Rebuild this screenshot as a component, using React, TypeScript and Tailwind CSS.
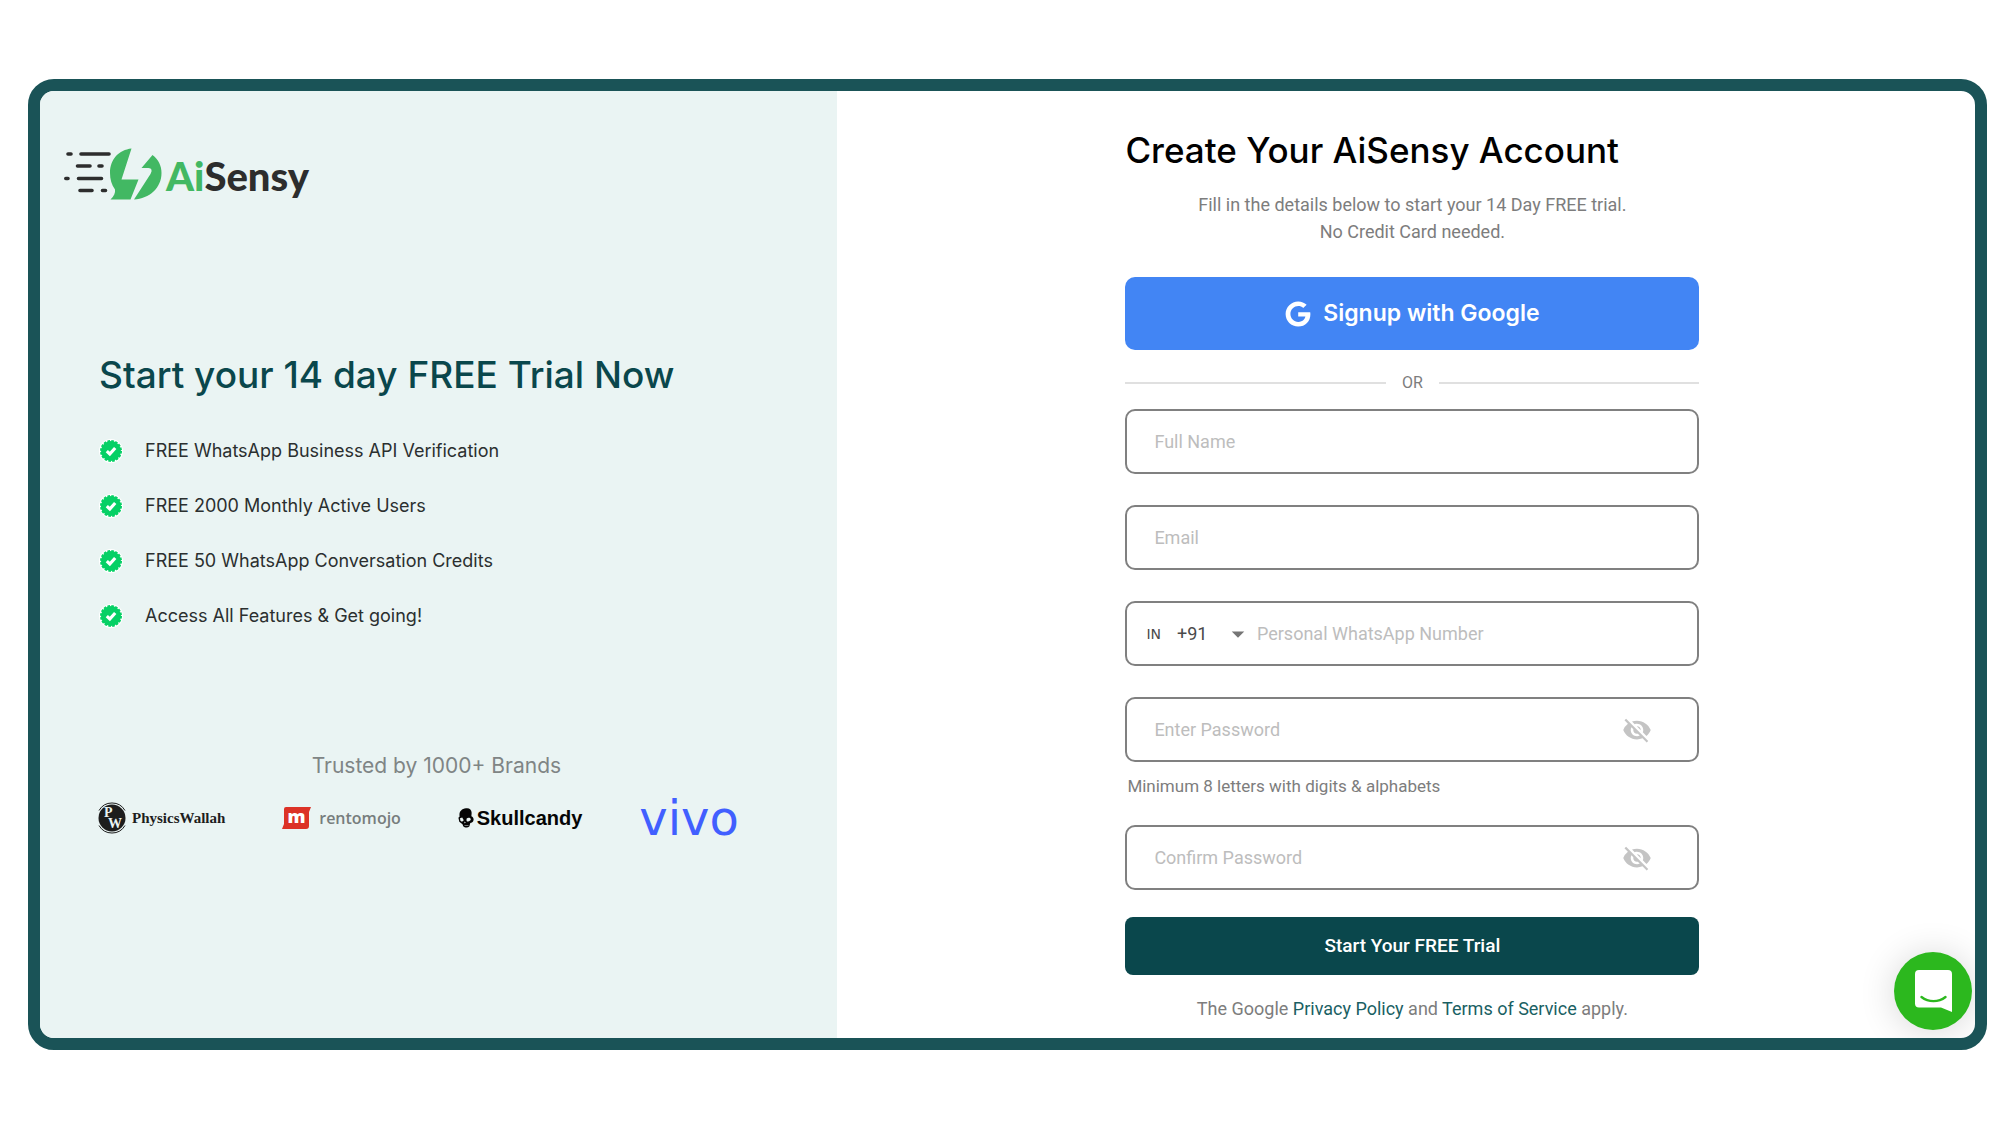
import React, { useState } from 'react';
import { FaGoogle } from 'react-icons/fa';
import { MdVisibilityOff, MdVisibility, MdArrowDropDown } from 'react-icons/md';

const FEATURES = [
    'FREE WhatsApp Business API Verification',
    'FREE 2000 Monthly Active Users',
    'FREE 50 WhatsApp Conversation Credits',
    'Access All Features & Get going!',
];

const App: React.FC = () => {
    return (
        <div className="min-h-screen flex bg-white pt-[79px] pb-[75px] pl-7 pr-[13px]">
            <div className="relative flex-1 grid grid-cols-[7fr_10fr] border-12 border-[#1a5357] rounded-[26px] overflow-hidden">
                <PromoPanel />
                <SignupPanel />
                <ChatLauncher />
            </div>
        </div>
    );
};

const PromoPanel: React.FC = () => (
    <section className="bg-[#eaf4f3] pt-[57px]">
        <div className="pl-6">
            <BrandLogo />
        </div>
        <div className="pl-[59px] pr-16">
            <h2 className="mt-[147px] font-['Inter',sans-serif] font-medium text-[37px] leading-[48px] text-[#0a474c]">
                Start your 14 day FREE Trial Now
            </h2>
            <ul className="mt-10 flex flex-col gap-[31px] font-['Inter',sans-serif] text-lg leading-6 text-[#2b2f2f]">
                {FEATURES.map(feature => (
                    <li key={feature} className="flex items-center gap-[22px]">
                        <CheckBadge />
                        {feature}
                    </li>
                ))}
            </ul>
        </div>
        <p className="mt-[122px] pr-1 text-center font-['Inter',sans-serif] text-[21px] leading-8 text-[#7f8585]">Trusted by 1000+ Brands</p>
        <div className="mt-[18px] pl-14 pr-[98px] flex items-center justify-between h-9">
            <PhysicsWallahLogo />
            <RentomojoLogo />
            <SkullcandyLogo />
            <span className="font-['DejaVu_Sans',sans-serif] text-[48px] leading-9 text-[#415fff]">vivo</span>
        </div>
    </section>
);

const CheckBadge: React.FC = () => (
    <svg viewBox="0 0 24 24" className="size-6" aria-hidden="true">
        <circle cx="12" cy="12" r="12" fill="#fff" />
        <circle cx="12" cy="12" r="10" fill="#06d065" />
        <circle cx="12" cy="12" r="10" fill="none" stroke="#06d065" strokeWidth="2" strokeDasharray="2.600 1.330" />
        <path d="M7.800 12.200L10.800 15L16.200 9" fill="none" stroke="#fff" strokeWidth="3.200" />
    </svg>
);

const BrandLogo: React.FC = () => (
    <div className="flex items-start gap-1">
        <svg viewBox="0 0 98 52" className="w-[98px] h-[52px]" aria-hidden="true">
            <g stroke="#2d2d2d" strokeWidth="3.600" strokeLinecap="round">
                <path d="M4 6H7M17 6H45M13.500 18H26M35 18H38M1.800 30.500H4M14.500 30.500H37.500M16 42.500H28M38.500 42.500H41.500" />
            </g>
            <path fill="#42b863" d="M67.500 .5C55 2 46 11 46 25C46 31 47.500 36.500 51 41.500C51.500 45 50 48 46.500 51.500H66.500L74.500 31.500H57.500Z" />
            <path fill="#42b863" d="M88.500 7L77.500 20H84.500Q89.500 20.500 86.500 26L70 51.500C85.500 50.500 97.500 40 97.500 25C97.500 18 94.500 11.500 88.500 7Z" />
        </svg>
        <span className="font-['Lato',sans-serif] font-black text-[40px] leading-[56px] text-[#2d2d2d]">
            <span className="text-[#42b863]">Ai</span>Sensy
        </span>
    </div>
);

const PhysicsWallahLogo: React.FC = () => (
    <div className="flex items-center gap-1">
        <svg viewBox="0 0 32 32" className="size-8" aria-hidden="true">
            <circle cx="16" cy="16" r="13.500" fill="#1d1d1d" />
            <path d="M3 8.500A15 15 0 0 1 29 8.500M3 23.500A15 15 0 0 0 29 23.500" fill="none" stroke="#1d1d1d" strokeWidth="1" />
            <text x="8" y="15" fontFamily="Liberation Serif, serif" fontWeight="700" fontSize="14" fill="#eaf4f3">P</text>
            <text x="12" y="26" fontFamily="Liberation Serif, serif" fontWeight="700" fontSize="14" fill="#eaf4f3">W</text>
        </svg>
        <span className="font-['Liberation_Serif',serif] font-bold text-[15px] leading-6 text-[#1d1d1d]">PhysicsWallah</span>
    </div>
);

const RentomojoLogo: React.FC = () => (
    <div className="flex items-center gap-2">
        <svg viewBox="0 0 29 22" className="w-[29px] h-[22px]" aria-hidden="true">
            <path fill="#dc3226" d="M4 0H29L27 5V19Q27 22 24 22H0L2 17V2Q2 0 4 0Z" />
            <text x="14.500" y="16" textAnchor="middle" fontFamily="Open Sans, sans-serif" fontWeight="800" fontSize="18" fill="#fff">m</text>
        </svg>
        <span className="font-['Open_Sans',sans-serif] font-semibold text-base leading-6 text-[#777d7d]">rentomojo</span>
    </div>
);

const SkullcandyLogo: React.FC = () => (
    <div className="flex items-center gap-[3px]">
        <svg viewBox="0 0 16 20" className="w-4 h-5" aria-hidden="true">
            <path fill="#050505" d="M8 .3C11.500 -.3 14 2 13.600 5.500L13.400 8.200C15 9 15.900 10.300 15.500 12.200C15.200 14 13.600 14.600 12.300 14.900L11.300 18.600C9.600 19.900 6.500 19.600 5.200 18.200L4.500 16.200L1.300 13.800L.4 9.800L1.600 8.600C.8 4 3.200 .9 8 .3Z" />
            <path fill="#eaf4f3" d="M2 10.200L4.200 9.600L5.800 12.300L4 13.800L2.400 12.800ZM8.500 10.800C9.800 9.400 12.300 9.600 12.800 11.300C12.600 13.300 9.600 14 8.600 12.900ZM6.600 13.600L7.800 14.800L6.300 15.200ZM6.500 17H10.500V17.600H6.500Z" />
        </svg>
        <span className="font-['Liberation_Sans',sans-serif] font-bold text-xl leading-6 text-[#050505]">Skullcandy</span>
    </div>
);

const SignupPanel: React.FC = () => {
    const [formData, setFormData] = useState({
        fullName: '',
        email: '',
        dialCode: '+91',
        phone: '',
        password: '',
        confirmPassword: '',
    });

    const handleChange = (e: React.ChangeEvent<HTMLInputElement | HTMLSelectElement>) => {
        setFormData({ ...formData, [e.target.name]: e.target.value });
    };

    return (
        <section className="pt-[37px] pl-[13px] font-['Roboto',sans-serif] text-lg text-[#7d7d7d]">
            <form onSubmit={e => e.preventDefault()} className="mx-auto w-full max-w-[574px]">
                <h1 className="font-['Inter',sans-serif] font-medium text-[35px] leading-11 text-black">Create Your AiSensy Account</h1>
                <p className="mt-[19px] text-center leading-[27px]">
                    Fill in the details below to start your 14 Day FREE trial.
                    <br />
                    No Credit Card needed.
                </p>

                <button type="button" className="mt-8 w-full h-[73px] flex items-center justify-center gap-3 rounded-[10px] bg-[#4285f4] font-['Inter',sans-serif] font-semibold text-[23px] text-white">
                    <FaGoogle className="size-[26px]" />
                    Signup with Google
                </button>

                <div className="mt-[21px] flex items-center gap-4 text-base leading-6">
                    <span className="h-0.5 flex-1 bg-[#e0e0e0]" />
                    OR
                    <span className="h-0.5 flex-1 bg-[#e0e0e0]" />
                </div>

                <div className="mt-[14px] flex flex-col gap-[31px]">
                    <TextField label="Full Name" name="fullName" type="text" value={formData.fullName} onChange={handleChange} />
                    <TextField label="Email" name="email" type="email" value={formData.email} onChange={handleChange} />
                    <div className="flex items-center h-[65px] rounded-[10px] border-2 border-[#808080] pl-[19px] pr-6">
                        <label htmlFor="dialCode" className="font-['DejaVu_Sans',sans-serif] text-sm text-[#4a4a4a]">IN</label>
                        <div className="ml-4 flex items-center">
                            <select id="dialCode" name="dialCode" value={formData.dialCode} onChange={handleChange} className="w-[46px] appearance-none bg-transparent text-[#4a4a4a] focus:outline-none">
                                <option>+91</option>
                                <option>+1</option>
                                <option>+44</option>
                            </select>
                            <MdArrowDropDown className="pointer-events-none size-[30px] text-[#757575]" />
                        </div>
                        <input name="phone" type="tel" aria-label="Personal WhatsApp Number" placeholder="Personal WhatsApp Number" value={formData.phone} onChange={handleChange} className="ml-1 min-w-0 flex-1 text-[#4a4a4a] placeholder-[#bdbdbd] focus:outline-none" />
                    </div>
                    <PasswordField label="Enter Password" name="password" value={formData.password} onChange={handleChange} />
                </div>
                <p className="mt-[14px] mb-[29px] pl-0.5 text-[17px] leading-5">Minimum 8 letters with digits &amp; alphabets</p>
                <PasswordField label="Confirm Password" name="confirmPassword" value={formData.confirmPassword} onChange={handleChange} />

                <button type="submit" className="mt-[27px] w-full h-[58px] rounded-lg bg-[#0a474c] font-medium text-[19px] text-white">
                    Start Your FREE Trial
                </button>
                <p className="mt-5 text-center leading-[27px]">
                    The Google <a href="#privacy" className="text-[#1a5f63]">Privacy Policy</a> and <a href="#terms" className="text-[#1a5f63]">Terms of Service</a> apply.
                </p>
            </form>
        </section>
    );
};

interface FieldProps {
    label: string;
    name: string;
    value: string;
    onChange: (e: React.ChangeEvent<HTMLInputElement>) => void;
}

const TextField: React.FC<FieldProps & { type: string }> = ({ label, name, type, value, onChange }) => (
    <input name={name} type={type} aria-label={label} placeholder={label} value={value} onChange={onChange} className="block w-full h-[65px] rounded-[10px] border-2 border-[#808080] px-[27px] text-[#4a4a4a] placeholder-[#bdbdbd] focus:outline-none" />
);

const PasswordField: React.FC<FieldProps> = ({ label, name, value, onChange }) => {
    const [visible, setVisible] = useState(false);

    return (
        <div className="flex items-center h-[65px] rounded-[10px] border-2 border-[#808080] pl-[27px] pr-[45px]">
            <input name={name} type={visible ? 'text' : 'password'} aria-label={label} placeholder={label} value={value} onChange={onChange} className="min-w-0 flex-1 text-[#4a4a4a] placeholder-[#bdbdbd] focus:outline-none" />
            <button type="button" aria-label="Toggle password visibility" onClick={() => setVisible(!visible)} className="text-[#c4c4c4]">
                {visible ? <MdVisibility className="size-[30px]" /> : <MdVisibilityOff className="size-[30px]" />}
            </button>
        </div>
    );
};

const ChatLauncher: React.FC = () => (
    <button type="button" aria-label="Open chat" className="absolute right-[3px] bottom-2 flex size-[78px] items-center justify-center rounded-full bg-[#2cb81e] shadow-[0_2px_36px_rgba(0,0,0,0.16)]">
        <svg viewBox="0 0 37 42" className="w-[37px] h-[42px]" aria-hidden="true">
            <path fill="#fff" d="M4 0H33Q37 0 37 4V42L26 37.500H4Q0 37.500 0 33.500V4Q0 0 4 0Z" />
            <path fill="none" stroke="#2cb81e" strokeWidth="2.400" strokeLinecap="round" d="M6.500 27C13.500 32.500 23.500 32.500 30.500 27" />
        </svg>
    </button>
);

export default App;
